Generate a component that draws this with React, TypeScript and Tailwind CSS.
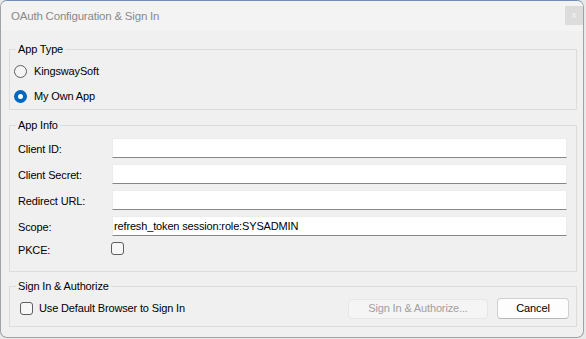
import React from 'react';

const font = { fontFamily: '"Liberation Sans", Arial, sans-serif' };

const Radio = ({ checked }: { checked?: boolean }) =>
  checked ? (
    <span className="w-[13px] h-[13px] rounded-full bg-[#0067c0] flex items-center justify-center shrink-0">
      <span className="w-[5px] h-[5px] rounded-full bg-white" />
    </span>
  ) : (
    <span className="w-[13px] h-[13px] rounded-full border border-[#5f5f5f] bg-[#f5f5f5] shrink-0" />
  );

const Checkbox = () => (
  <span className="w-[13px] h-[13px] rounded-[3px] border border-[#5f5f5f] bg-[#f7f7f7] shrink-0" />
);

const Field = ({ label, value }: { label: string; value?: string }) => (
  <div className="flex items-center h-[20px] pl-[8px] pr-[9px]">
    <span className="w-[94px] pt-[3px]">{label}</span>
    <div className="flex-1 h-[20px] bg-white border border-[#ececec] border-b-[#868686] flex items-center pl-[1px] text-black">
      {value}
    </div>
  </div>
);

export default function App() {
  return (
    <div className="w-[586px] h-[339px] bg-[#e9e9e9] text-[11px] tracking-[-0.15px] text-black" style={font}>
      <div className="w-[584px] h-[338px] border border-[#9ea3a8] border-t-[#6f8fb5] rounded-[7px] bg-[#f0f0f0] overflow-hidden flex flex-col">
        {/* Title bar */}
        <div className="h-[30px] bg-[#f3f3f3] flex items-center justify-between pl-[10px] pr-0 shrink-0">
          <span className="text-[11.5px] tracking-[-0.2px] text-[#8a8a8a] pt-[2px]">OAuth Configuration &amp; Sign In</span>
          <div className="w-[18px] h-[19px] mt-[-2px] bg-[#dcdcdc] flex items-center justify-center text-[9px] text-[#f4f4f4] leading-none">
            x
          </div>
        </div>

        <div className="px-[8px] pt-[10px]">
          {/* App Type */}
          <fieldset className="w-[568px] border border-[#dcdcdc]">
            <legend className="ml-[6px] px-[2px] leading-[16px]">App Type</legend>
            <div className="pt-[2px]">
              <div className="h-[25px] flex items-center gap-[7px] pl-[4px]">
                <Radio />
                <span>KingswaySoft</span>
              </div>
              <div className="h-[25px] flex items-center gap-[7px] pl-[4px]">
                <Radio checked />
                <span>My Own App</span>
              </div>
            </div>
          </fieldset>

          {/* App Info */}
          <fieldset className="w-[568px] border border-[#dcdcdc] mt-[7px]">
            <legend className="ml-[6px] px-[2px] leading-[16px]">App Info</legend>
            <div className="flex flex-col gap-[6px] pt-[5px] pb-[16px]">
              <Field label="Client ID:" />
              <Field label="Client Secret:" />
              <Field label="Redirect URL:" />
              <Field label="Scope:" value="refresh_token session:role:SYSADMIN" />
              <div className="flex items-center h-[13px] pl-[8px]">
                <span className="w-[93px] pt-[3px]">PKCE:</span>
                <Checkbox />
              </div>
            </div>
          </fieldset>

          {/* Sign In & Authorize */}
          <fieldset className="w-[568px] border border-[#dcdcdc] mt-[6px]">
            <legend className="ml-[6px] px-[2px] leading-[16px]">Sign In &amp; Authorize</legend>
            <div className="flex items-center h-[21px] mt-[4px] mb-[7px] pl-[10px] pr-[7px]">
              <Checkbox />
              <span className="ml-[6px]">Use Default Browser to Sign In</span>
              <div className="flex-1" />
              <button className="w-[140px] h-[20px] rounded-[4px] border border-[#e6e6e6] bg-[#f5f5f5] text-[#a0a0a0]">
                Sign In &amp; Authorize...
              </button>
              <button className="w-[72px] h-[21px] ml-[9px] rounded-[4px] border border-[#d0d0d0] border-b-[#b8b8b8] bg-[#fdfdfd] text-black">
                Cancel
              </button>
            </div>
          </fieldset>
        </div>
      </div>
    </div>
  );
}
